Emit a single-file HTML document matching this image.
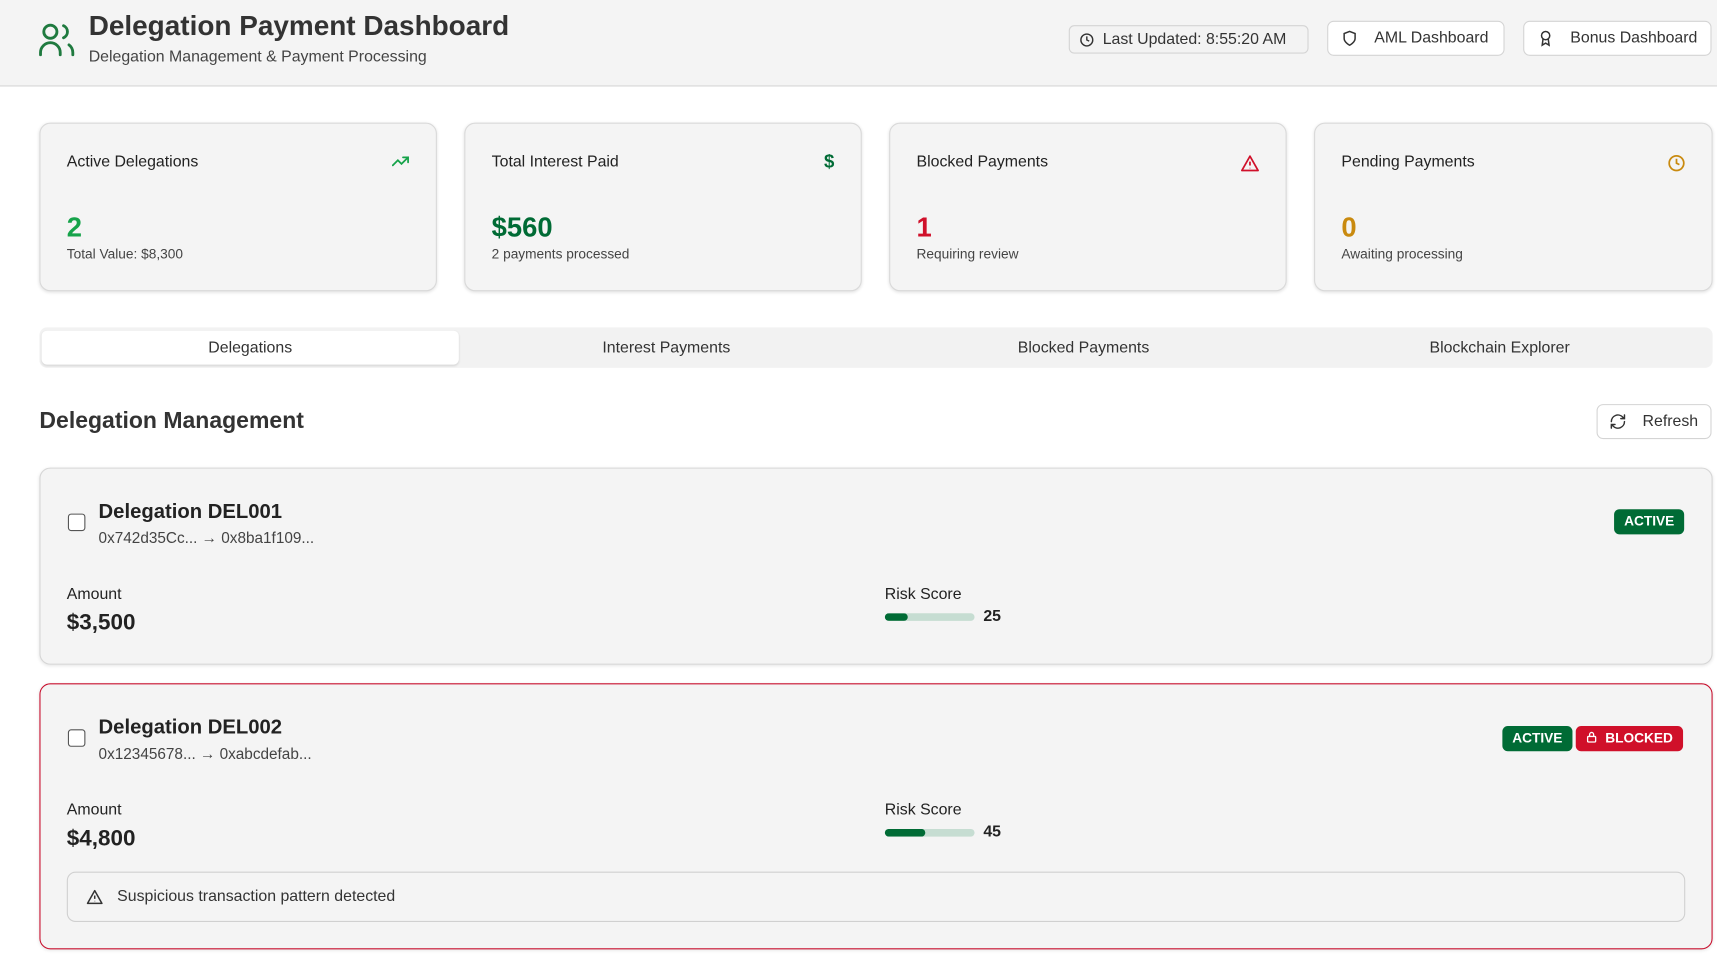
<!DOCTYPE html>
<html><head><meta charset="utf-8"><style>
*{box-sizing:border-box;margin:0;padding:0}
html,body{width:1717px;height:956px;overflow:hidden;background:#fff;font-family:"Liberation Sans",sans-serif;color:#222}
#w{position:absolute;left:0;top:0;width:1568px;height:873px;transform:scale(1.09503);transform-origin:0 0}
.a{position:absolute}
.hdr{left:0;top:0;width:1568px;height:79px;background:#f4f4f4;border-bottom:1px solid #d6d6d6}
.btn{position:absolute;background:#fff;border:1px solid #d4d4d4;border-radius:6px;font-size:14.5px;color:#333;display:flex;align-items:center}
.card{position:absolute;background:#f4f4f4;border:1px solid #d9d9d9;border-radius:10px;box-shadow:0 1px 3px rgba(0,0,0,.12)}
.lbl{position:absolute;left:24px;top:27px;font-size:14.5px;color:#222}
.val{position:absolute;left:24px;top:81px;font-size:25px;font-weight:bold}
.sub{position:absolute;left:24px;top:112px;font-size:12.5px;color:#444}
.ico{position:absolute;right:24px;top:28px}
.tab{position:absolute;top:0;height:37px;line-height:38px;font-size:14.5px;color:#333;text-align:center;width:381px}
.dc{position:absolute;left:36px;width:1528px;background:#f4f4f4;border:1px solid #d6d6d6;border-radius:10px;box-shadow:0 1px 3px rgba(0,0,0,.1)}
.cb{position:absolute;left:25px;width:16px;height:16px;border:1.5px solid #555;border-radius:3px;background:#fff}
.t{position:absolute;left:53px;font-size:18.5px;font-weight:bold;color:#222}
.ad{position:absolute;left:53px;font-size:14px;color:#444}
.sm{position:absolute;font-size:14.5px;color:#222}
.big{position:absolute;font-size:20.5px;font-weight:bold;color:#222}
.bar{position:absolute;width:82px;height:7px;background:#c6ddd2;border-radius:4px;overflow:hidden}
.bar i{display:block;height:100%;background:#006b35;border-radius:4px}
.badge{position:absolute;height:23px;line-height:23px;border-radius:5px;color:#fff;font-size:12.5px;font-weight:bold;padding:0 9px}
</style></head><body><div id="w">
<div class="a hdr"></div>
<svg class="a" style="left:34px;top:19px" width="36" height="34" viewBox="0 0 36 34" fill="none" stroke="#1f7a3f" stroke-width="2.6" stroke-linecap="round"><circle cx="12" cy="10" r="6"/><path d="M3 31v-2a9 9 0 0 1 18 0v2"/><path d="M24 4.5a6 6 0 0 1 0 11"/><path d="M29 22a9 9 0 0 1 3.5 7v2"/></svg>
<div class="a" style="left:81px;top:10px;font-size:25.5px;font-weight:bold;color:#333">Delegation Payment Dashboard</div>
<div class="a" style="left:81px;top:44px;font-size:14.5px;color:#444">Delegation Management &amp; Payment Processing</div>
<div class="btn" style="left:976px;top:23px;width:219px;height:26px;background:#f3f3f3;border-radius:5px;padding-left:9px"><svg width="13" height="13" viewBox="0 0 24 24" fill="none" stroke="#333" stroke-width="2.4"><circle cx="12" cy="12" r="10"/><path d="M12 6v6l4 2"/></svg><span style="margin-left:8px">Last Updated: 8:55:20 AM</span></div>
<div class="btn" style="left:1212px;top:19px;width:162px;height:32px;padding-left:12px"><svg width="15" height="16" viewBox="0 0 24 24" fill="none" stroke="#333" stroke-width="2.2"><path d="M12 22s8-4 8-10V5l-8-3-8 3v7c0 6 8 10 8 10z"/></svg><span style="margin-left:15px">AML Dashboard</span></div>
<div class="btn" style="left:1391px;top:19px;width:172px;height:32px;padding-left:12px"><svg width="15" height="16" viewBox="0 0 24 24" fill="none" stroke="#333" stroke-width="2.2"><circle cx="12" cy="8" r="6"/><path d="M8.2 13L7 22l5-3 5 3-1.2-9"/></svg><span style="margin-left:15px">Bonus Dashboard</span></div>

<div class="card" style="left:36px;top:112px;width:363px;height:154px"><div class="lbl">Active Delegations</div><svg class="ico" width="16" height="12" viewBox="0 0 24 16" fill="none" stroke="#16a34a" stroke-width="2.4" stroke-linecap="round"><path d="M1 14l7-7 5 5 9-9M15 3h7v7"/></svg><div class="val" style="color:#16a34a">2</div><div class="sub">Total Value: $8,300</div></div>
<div class="card" style="left:424px;top:112px;width:363px;height:154px"><div class="lbl">Total Interest Paid</div><div class="ico" style="top:25px;color:#006b35;font-size:17px;font-weight:bold">$</div><div class="val" style="color:#006b35">$560</div><div class="sub">2 payments processed</div></div>
<div class="card" style="left:812px;top:112px;width:363px;height:154px"><div class="lbl">Blocked Payments</div><svg class="ico" width="17" height="16" viewBox="0 0 24 22" fill="none" stroke="#d0102a" stroke-width="2.2" stroke-linejoin="round"><path d="M12 2L1.5 20.5h21z"/><path d="M12 9v5M12 17v.5"/></svg><div class="val" style="color:#d0102a">1</div><div class="sub">Requiring review</div></div>
<div class="card" style="left:1200px;top:112px;width:364px;height:154px"><div class="lbl">Pending Payments</div><svg class="ico" width="16" height="16" viewBox="0 0 24 24" fill="none" stroke="#c98a0f" stroke-width="2.4"><circle cx="12" cy="12" r="10"/><path d="M12 6v6l4 2"/></svg><div class="val" style="color:#c98a0f">0</div><div class="sub">Awaiting processing</div></div>

<div class="a" style="left:36px;top:299px;width:1528px;height:37px;background:#f2f2f2;border-radius:7px">
<div class="a" style="left:2px;top:3px;width:381px;height:31px;background:#fff;border-radius:5px;box-shadow:0 1px 2px rgba(0,0,0,.12)"></div>
<div class="tab" style="left:2px">Delegations</div><div class="tab" style="left:382px">Interest Payments</div><div class="tab" style="left:763px">Blocked Payments</div><div class="tab" style="left:1143px">Blockchain Explorer</div></div>

<div class="a" style="left:36px;top:373px;font-size:21px;font-weight:bold;color:#333">Delegation Management</div>
<div class="btn" style="left:1458px;top:369px;width:105px;height:32px;padding-left:10px"><svg width="17" height="16" viewBox="0 0 24 24" fill="none" stroke="#333" stroke-width="2" stroke-linecap="round"><path d="M21 12a9 9 0 0 1-15.5 6.2L3 16M3 12a9 9 0 0 1 15.5-6.2L21 8M21 3v5h-5M3 21v-5h5"/></svg><span style="margin-left:14px">Refresh</span></div>

<div class="dc" style="top:427px;height:180px">
<div class="cb" style="top:41px"></div><div class="t" style="top:28px">Delegation DEL001</div><div class="ad" style="top:55px">0x742d35Cc... → 0x8ba1f109...</div>
<div class="badge" style="right:25px;top:37px;background:#006b35">ACTIVE</div>
<div class="sm" style="left:24px;top:107px">Amount</div><div class="big" style="left:24px;top:129px">$3,500</div>
<div class="sm" style="left:771px;top:107px">Risk Score</div><div class="bar" style="left:771px;top:132px"><i style="width:25%"></i></div><div class="sm" style="left:861px;top:127px;font-weight:bold">25</div>
</div>
<div class="dc" style="top:624px;height:243px;border-color:#c8102e">
<div class="cb" style="top:41px"></div><div class="t" style="top:28px">Delegation DEL002</div><div class="ad" style="top:55px">0x12345678... → 0xabcdefab...</div>
<div class="badge" style="left:1335px;top:38px;background:#006b35">ACTIVE</div>
<div class="badge" style="left:1402px;top:38px;background:#d0102a;padding-left:9px"><svg width="11" height="12" viewBox="0 0 24 24" fill="none" stroke="#fff" stroke-width="2.6" style="vertical-align:-1px"><rect x="4" y="11" width="16" height="11" rx="2"/><path d="M8 11V7a4 4 0 0 1 8 0v4"/></svg>&nbsp; BLOCKED</div>
<div class="sm" style="left:24px;top:107px">Amount</div><div class="big" style="left:24px;top:129px">$4,800</div>
<div class="sm" style="left:771px;top:107px">Risk Score</div><div class="bar" style="left:771px;top:132px"><i style="width:45%"></i></div><div class="sm" style="left:861px;top:127px;font-weight:bold">45</div>
<div class="a" style="left:24px;top:171px;width:1478px;height:46px;border:1px solid #d0d0d0;border-radius:8px">
<svg class="a" style="left:17px;top:15px" width="15" height="14" viewBox="0 0 24 22" fill="none" stroke="#333" stroke-width="2.2" stroke-linejoin="round"><path d="M12 2L1.5 20.5h21z"/><path d="M12 9v5M12 17v.5"/></svg>
<div class="sm" style="left:45px;top:14px;color:#333">Suspicious transaction pattern detected</div></div>
</div>
</div></body></html>
